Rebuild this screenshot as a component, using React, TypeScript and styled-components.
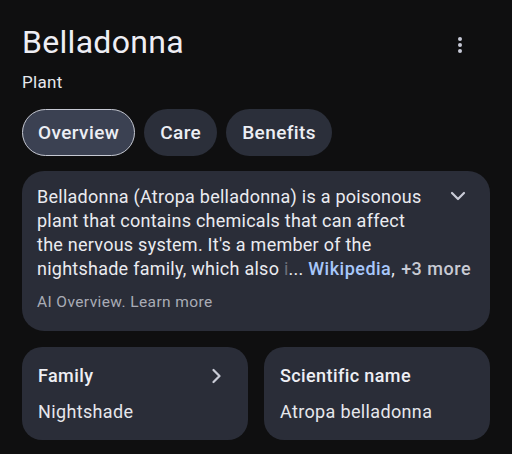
import React from "react";
import styled, { createGlobalStyle } from "styled-components";

const Global = createGlobalStyle`
  html, body { margin: 0; padding: 0; background: #0f0f10; }
  body { font-family: Roboto, "Open Sans", Arial, sans-serif; color: #e8e9ef; }
`;

const Page = styled.div`
  width: 512px;
  height: 454px;
  box-sizing: border-box;
  padding: 23px 22px 0 22px;
  background: #0f0f10;
  overflow: hidden;
`;

const Header = styled.div`
  display: flex;
  align-items: flex-start;
  justify-content: space-between;
`;

const Title = styled.h1`
  margin: 0;
  font-size: 32px;
  line-height: 38px;
  font-weight: 400;
  color: #eeeef4;
  letter-spacing: 0.3px;
`;

const Kebab = styled.div`
  display: flex;
  flex-direction: column;
  gap: 2px;
  margin: 14px 28px 0 0;
`;

const Dot = styled.span`
  width: 4px;
  height: 4px;
  border-radius: 50%;
  background: #c7c9d6;
`;

const Subtitle = styled.div`
  margin-top: 11px;
  font-size: 17px;
  line-height: 20px;
  letter-spacing: 0.3px;
  color: #e6e7ec;
`;

const Chips = styled.div`
  display: flex;
  gap: 9px;
  margin-top: 17px;
`;

const Chip = styled.div<{ $active?: boolean }>`
  height: 47px;
  box-sizing: border-box;
  padding: 0 ${(p) => (p.$active ? 15 : 16)}px;
  display: flex;
  align-items: center;
  border-radius: 24px;
  font-size: 19px;
  font-weight: 500;
  letter-spacing: 0.4px;
  color: #eceef4;
  background: ${(p) => (p.$active ? "#3b4152" : "#2b2f3a")};
  border: ${(p) => (p.$active ? "1px solid #c5c8d2" : "none")};
`;

const OverviewCard = styled.div`
  margin-top: 15px;
  background: #2a2d38;
  border-radius: 22px;
  padding: 14px 16px 20px 15px;
  display: flex;
  align-items: flex-start;
`;

const TextBlock = styled.div`
  flex: 1;
  min-width: 0;
`;

const Body = styled.div`
  font-size: 18px;
  line-height: 24px;
  letter-spacing: 0.25px;
  color: #eaebf0;
`;

const Line = styled.div`
  white-space: nowrap;
`;

const Faded = styled.span`
  color: #6d707a;
`;

const Link = styled.span`
  color: #a8c7fa;
  font-weight: 500;
  letter-spacing: 0.5px;
`;

const More = styled.span`
  margin-left: 6px;
  color: #c8cad3;
  font-weight: 500;
  letter-spacing: 0.5px;
`;

const Caption = styled.div`
  margin-top: 12px;
  font-size: 15.5px;
  line-height: 18px;
  letter-spacing: 0.4px;
  color: #a9acb6;
`;

const Toggle = styled.div`
  flex: none;
  margin: 6px 8px 0 0;
  display: flex;
`;

const Grid = styled.div`
  display: grid;
  grid-template-columns: 1fr 1fr;
  gap: 16px;
  margin-top: 16px;
`;

const InfoCard = styled.div`
  background: #2a2d38;
  border-radius: 20px;
  height: 93px;
  box-sizing: border-box;
  padding: 17px 16px 0 16px;
`;

const InfoHead = styled.div`
  display: flex;
  align-items: center;
  justify-content: space-between;
  font-size: 18px;
  line-height: 24px;
  font-weight: 500;
  letter-spacing: 0.4px;
  color: #eeeff4;
`;

const InfoValue = styled.div`
  margin-top: 12px;
  font-size: 18px;
  line-height: 24px;
  letter-spacing: 0.35px;
  color: #e6e7ec;
`;

const ChevronDown = () => (
  <svg width="16" height="10" viewBox="0 0 16 10">
    <path d="M2 2l6 6 6-6" fill="none" stroke="#c9cbd6" strokeWidth="2.2" strokeLinecap="round" strokeLinejoin="round" />
  </svg>
);

const ChevronRight = () => (
  <svg width="10" height="16" viewBox="0 0 10 16" style={{ marginRight: 11 }}>
    <path d="M2.5 2l6 6-6 6" fill="none" stroke="#c9cbd6" strokeWidth="2.2" strokeLinecap="round" strokeLinejoin="round" />
  </svg>
);

export default function App() {
  return (
    <Page>
      <Global />
      <Header>
        <Title>Belladonna</Title>
        <Kebab>
          <Dot />
          <Dot />
          <Dot />
        </Kebab>
      </Header>
      <Subtitle>Plant</Subtitle>
      <Chips>
        <Chip $active>Overview</Chip>
        <Chip>Care</Chip>
        <Chip>Benefits</Chip>
      </Chips>
      <OverviewCard>
        <TextBlock>
          <Body>
            <Line>Belladonna (Atropa belladonna) is a poisonous</Line>
            <Line>plant that contains chemicals that can affect</Line>
            <Line>the nervous system. It's a member of the</Line>
            <Line>
              nightshade family, which also <Faded>i</Faded>... <Link>Wikipedia</Link>,<More>+3 more</More>
            </Line>
          </Body>
          <Caption>AI Overview. Learn more</Caption>
        </TextBlock>
        <Toggle>
          <ChevronDown />
        </Toggle>
      </OverviewCard>
      <Grid>
        <InfoCard>
          <InfoHead>
            Family
            <ChevronRight />
          </InfoHead>
          <InfoValue>Nightshade</InfoValue>
        </InfoCard>
        <InfoCard>
          <InfoHead>Scientific name</InfoHead>
          <InfoValue>Atropa belladonna</InfoValue>
        </InfoCard>
      </Grid>
    </Page>
  );
}
